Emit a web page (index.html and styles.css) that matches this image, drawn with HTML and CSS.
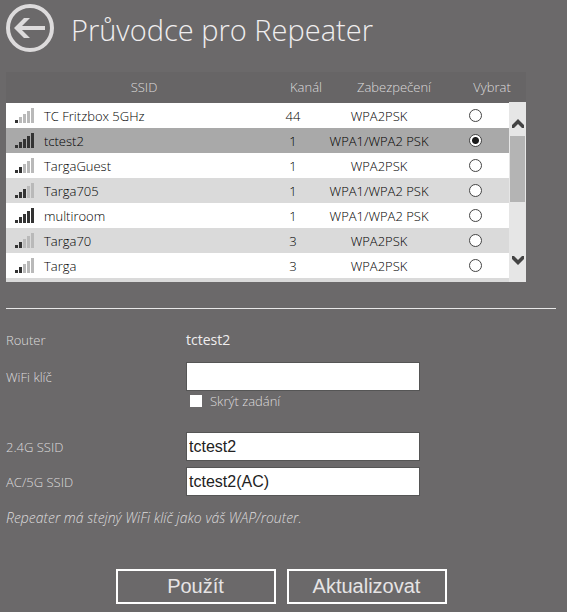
FILE: index.html
```html
<!DOCTYPE html>
<html lang="cs">
<head>
<meta charset="utf-8">
<title>Průvodce pro Repeater</title>
<link rel="stylesheet" href="styles.css">
</head>
<body>
<header class="top">
  <a class="back" href="#" aria-label="Zpět">
    <svg width="48" height="48" viewBox="0 0 48 48" fill="none" stroke="currentColor">
      <circle cx="24" cy="24" r="22" stroke-width="4"/>
      <path d="M10 24H39" stroke-width="4"/>
      <path d="M18 14H24L14 24L24 34H18L8 24Z" fill="currentColor" stroke="none"/>
    </svg>
  </a>
  <h1>Průvodce pro Repeater</h1>
</header>

<main>
  <section class="networks">
    <table>
      <thead>
        <tr><th>SSID</th><th>Kanál</th><th>Zabezpečení</th><th>Vybrat</th></tr>
      </thead>
      <tbody>
        <tr><td class="name"><span class="signal s1"><i></i><i></i><i></i><i></i><i></i></span>TC Fritzbox 5GHz</td><td>44</td><td>WPA2PSK</td><td><input type="radio" name="net" aria-label="TC Fritzbox 5GHz"></td></tr>
        <tr class="selected"><td class="name"><span class="signal s5"><i></i><i></i><i></i><i></i><i></i></span>tctest2</td><td>1</td><td>WPA1/WPA2 PSK</td><td><input type="radio" name="net" aria-label="tctest2" checked></td></tr>
        <tr><td class="name"><span class="signal s2"><i></i><i></i><i></i><i></i><i></i></span>TargaGuest</td><td>1</td><td>WPA2PSK</td><td><input type="radio" name="net" aria-label="TargaGuest"></td></tr>
        <tr><td class="name"><span class="signal s3"><i></i><i></i><i></i><i></i><i></i></span>Targa705</td><td>1</td><td>WPA1/WPA2 PSK</td><td><input type="radio" name="net" aria-label="Targa705"></td></tr>
        <tr><td class="name"><span class="signal s5"><i></i><i></i><i></i><i></i><i></i></span>multiroom</td><td>1</td><td>WPA1/WPA2 PSK</td><td><input type="radio" name="net" aria-label="multiroom"></td></tr>
        <tr><td class="name"><span class="signal s2"><i></i><i></i><i></i><i></i><i></i></span>Targa70</td><td>3</td><td>WPA2PSK</td><td><input type="radio" name="net" aria-label="Targa70"></td></tr>
        <tr><td class="name"><span class="signal s2"><i></i><i></i><i></i><i></i><i></i></span>Targa</td><td>3</td><td>WPA2PSK</td><td><input type="radio" name="net" aria-label="Targa"></td></tr>
        <tr><td></td><td></td><td></td><td></td></tr>
      </tbody>
    </table>
    <div class="scrollbar" aria-hidden="true">
      <svg class="arrow" width="12" height="9" viewBox="0 0 12 9"><path d="M0 9V6L6 0L12 6V9L10 9L6 5L2 9Z"/></svg>
      <div class="thumb"></div>
      <svg class="arrow down" width="12" height="9" viewBox="0 0 12 9"><path d="M0 0V3L6 9L12 3V0L10 0L6 4L2 0Z"/></svg>
    </div>
  </section>

  <hr>

  <form>
    <div class="row">
      <span>Router</span>
      <output class="router">tctest2</output>
    </div>
    <div class="row">
      <label for="key">WiFi klíč</label>
      <input class="text" id="key" type="text">
    </div>
    <div class="hide">
      <input id="hide" type="checkbox">
      <label for="hide">Skrýt zadání</label>
    </div>
    <div class="row">
      <label for="ssid24">2.4G SSID</label>
      <input class="text" id="ssid24" type="text" value="tctest2">
    </div>
    <div class="row">
      <label for="ssid5">AC/5G SSID</label>
      <input class="text" id="ssid5" type="text" value="tctest2(AC)">
    </div>
    <p class="note">Repeater má stejný WiFi klíč jako váš WAP/router.</p>
    <div class="actions">
      <button type="button">Použít</button>
      <button type="button">Aktualizovat</button>
    </div>
  </form>
</main>
</body>
</html>
```
FILE: styles.css
```css
* { box-sizing: border-box; }

body {
  margin: 0;
  padding: 4px 11px 8px 6px;
  background: #6b696a;
  color: #dddbdc;
  font: 300 13px/20px "Open Sans", "Noto Sans", sans-serif;
}

.top {
  display: flex;
  align-items: center;
  gap: 17px;
  height: 48px;
}
.back { display: flex; color: #dddbdc; }
h1 {
  margin: 0;
  padding-top: 4px;
  font-size: 29px;
  line-height: 36px;
  font-weight: 300;
  color: #f0eeef;
}

.networks {
  position: relative;
  margin: 20px 30px 0 0;
  background: #676566;
}
table, thead, tbody { display: block; }
tr {
  display: grid;
  grid-template-columns: 263fr 48fr 124fr 68fr;
  align-items: center;
  height: 25px;
}
thead tr {
  grid-template-columns: 276fr 48fr 128fr 68fr;
  height: 31px;
  padding-bottom: 2px;
}
th { font-weight: 300; padding: 0; }
td { padding: 0; text-align: center; white-space: nowrap; }
tbody {
  height: 179px;
  margin-right: 17px;
  overflow: hidden;
  color: #000;
}
tbody tr { background: #fff; }
tbody tr:nth-child(even) { background: #dadada; }
tbody tr.selected { background: #a9a9a9; }
.name {
  display: flex;
  align-items: center;
  gap: 10px;
  padding-left: 9px;
}

.signal { display: flex; align-items: flex-end; gap: 1px; height: 15px; }
.signal i { width: 3px; background: #b9b9b9; }
.signal i:nth-child(1) { height: 3px; }
.signal i:nth-child(2) { height: 6px; }
.signal i:nth-child(3) { height: 9px; }
.signal i:nth-child(4) { height: 12px; }
.signal i:nth-child(5) { height: 15px; }
.signal.s1 i:nth-child(-n+1),
.signal.s2 i:nth-child(-n+2),
.signal.s3 i:nth-child(-n+3),
.signal.s5 i:nth-child(n) { background: #333; }

input[type="radio"] {
  appearance: none;
  display: block;
  width: 13px;
  height: 13px;
  margin: 0 auto;
  border: 1px solid #444;
  border-radius: 50%;
  background: #fff;
}
input[type="radio"]:checked {
  background: radial-gradient(circle, #1a1a1a 3px, #fff 4px);
}

.scrollbar {
  position: absolute;
  right: 0;
  bottom: 0;
  width: 17px;
  height: 180px;
  padding: 17px 0;
  display: flex;
  flex-direction: column;
  align-items: center;
  background: #e6e6e6;
}
.arrow { fill: #444; flex: none; }
.thumb {
  width: 15px;
  height: 66px;
  margin-top: 8px;
  background: #b4b4b4;
}
.down { margin-top: auto; }

hr {
  height: 1px;
  margin: 26px 0 21px;
  border: 0;
  background: #e8e8e8;
}

.row {
  display: grid;
  grid-template-columns: 180px minmax(0, 234px);
  align-items: center;
  margin-bottom: 6px;
}
.row:first-child { margin-bottom: 12px; }
.router { font-size: 14px; font-weight: 500; color: #f0eeef; }
.text {
  width: 100%;
  height: 29px;
  padding: 0 2px;
  border: 1px solid #555;
  border-radius: 0;
  background: #fff;
  color: #222;
  font: 16px "Liberation Sans", Arial, sans-serif;
}
.hide {
  display: flex;
  align-items: center;
  gap: 8px;
  margin: -6px 0 21px 184px;
}
input[type="checkbox"] {
  appearance: none;
  width: 12px;
  height: 12px;
  margin: 0;
  background: #fff;
}
input[type="checkbox"]:checked { background: #333; border: 2px solid #fff; }

.note {
  margin: 0;
  padding-top: 6px;
  font-size: 14px;
  font-style: italic;
}

.actions {
  display: flex;
  justify-content: center;
  gap: 11px;
  margin-top: 41px;
}
button {
  width: 160px;
  height: 35px;
  padding: 0;
  border: 2px solid #fff;
  background: transparent;
  color: #e6e4e5;
  font: 20px "Liberation Sans", Arial, sans-serif;
}
```
